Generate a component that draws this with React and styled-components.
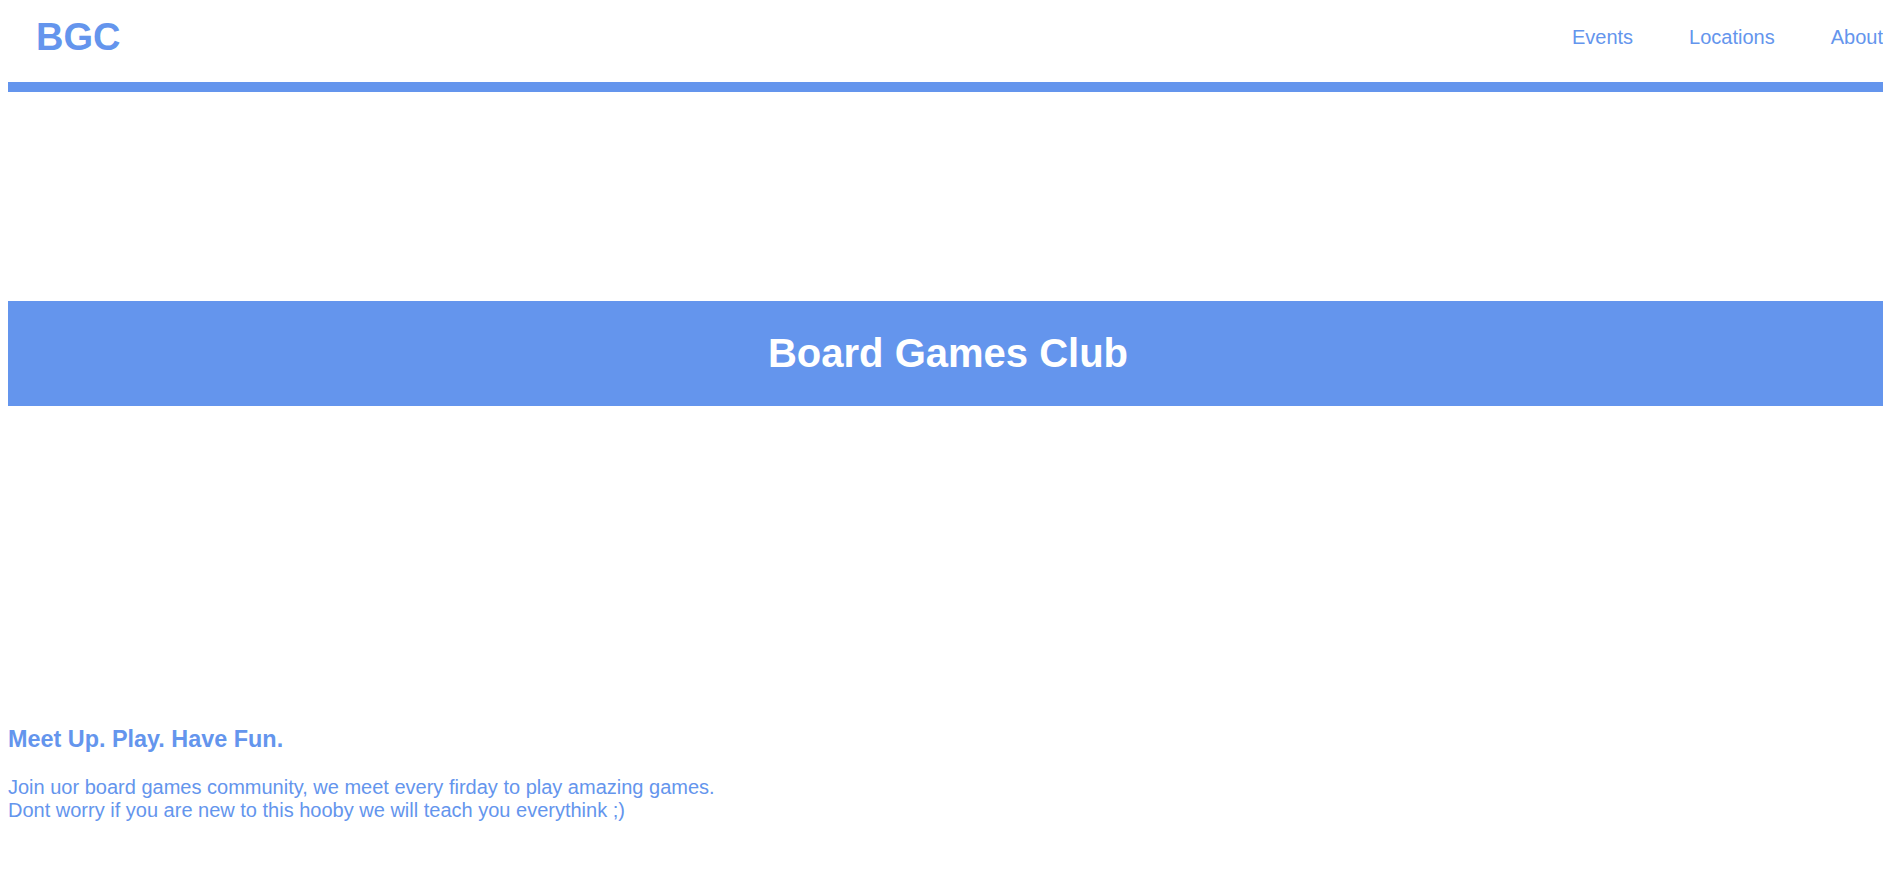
import React from "react";
import styled, { createGlobalStyle } from "styled-components";

const BLUE = "#6495ED";

const GlobalStyle = createGlobalStyle`
  html {
    background: #ffffff;
    overflow-x: hidden;
  }
  body {
    margin: 8px;
    font-family: "Liberation Sans", Arial, sans-serif;
    font-size: 20px;
    color: ${BLUE};
  }
`;

const Header = styled.header`
  box-sizing: border-box;
  width: calc(100% + 20px);
  display: flex;
  align-items: center;
  justify-content: space-between;
  height: 84px;
  padding: 0 20px 16px 28px;
  border-bottom: 10px solid ${BLUE};
`;

const Logo = styled.div`
  font-size: 38px;
  font-weight: 700;
  color: ${BLUE};
`;

const Nav = styled.nav`
  display: flex;
  align-items: center;
  gap: 56px;
`;

const NavLink = styled.a`
  font-size: 20px;
  color: ${BLUE};
  text-decoration: none;
  cursor: pointer;
`;

const Band = styled.section`
  margin-top: 209px;
  width: calc(100% + 5px);
  padding: 30px 0;
  background: ${BLUE};
  text-align: center;
`;

const Title = styled.h1`
  margin: 0;
  font-size: 40px;
  font-weight: 700;
  color: #ffffff;
`;

const Intro = styled.section`
  margin-top: 320px;
`;

const Tagline = styled.h3`
  margin: 0 0 1em;
  font-size: 1.17em;
  font-weight: 700;
  color: ${BLUE};
`;

const Text = styled.p`
  margin: 0;
  font-size: 20px;
  color: ${BLUE};
`;

export default function App() {
  return (
    <>
      <GlobalStyle />
      <Header>
        <Logo>BGC</Logo>
        <Nav>
          <NavLink>Events</NavLink>
          <NavLink>Locations</NavLink>
          <NavLink>About</NavLink>
        </Nav>
      </Header>
      <main>
        <Band>
          <Title>Board Games Club</Title>
        </Band>
        <Intro>
          <Tagline>Meet Up. Play. Have Fun.</Tagline>
          <Text>
            Join uor board games community, we meet every firday to play amazing games.
            <br />
            Dont worry if you are new to this hooby we will teach you everythink ;)
          </Text>
        </Intro>
      </main>
    </>
  );
}
